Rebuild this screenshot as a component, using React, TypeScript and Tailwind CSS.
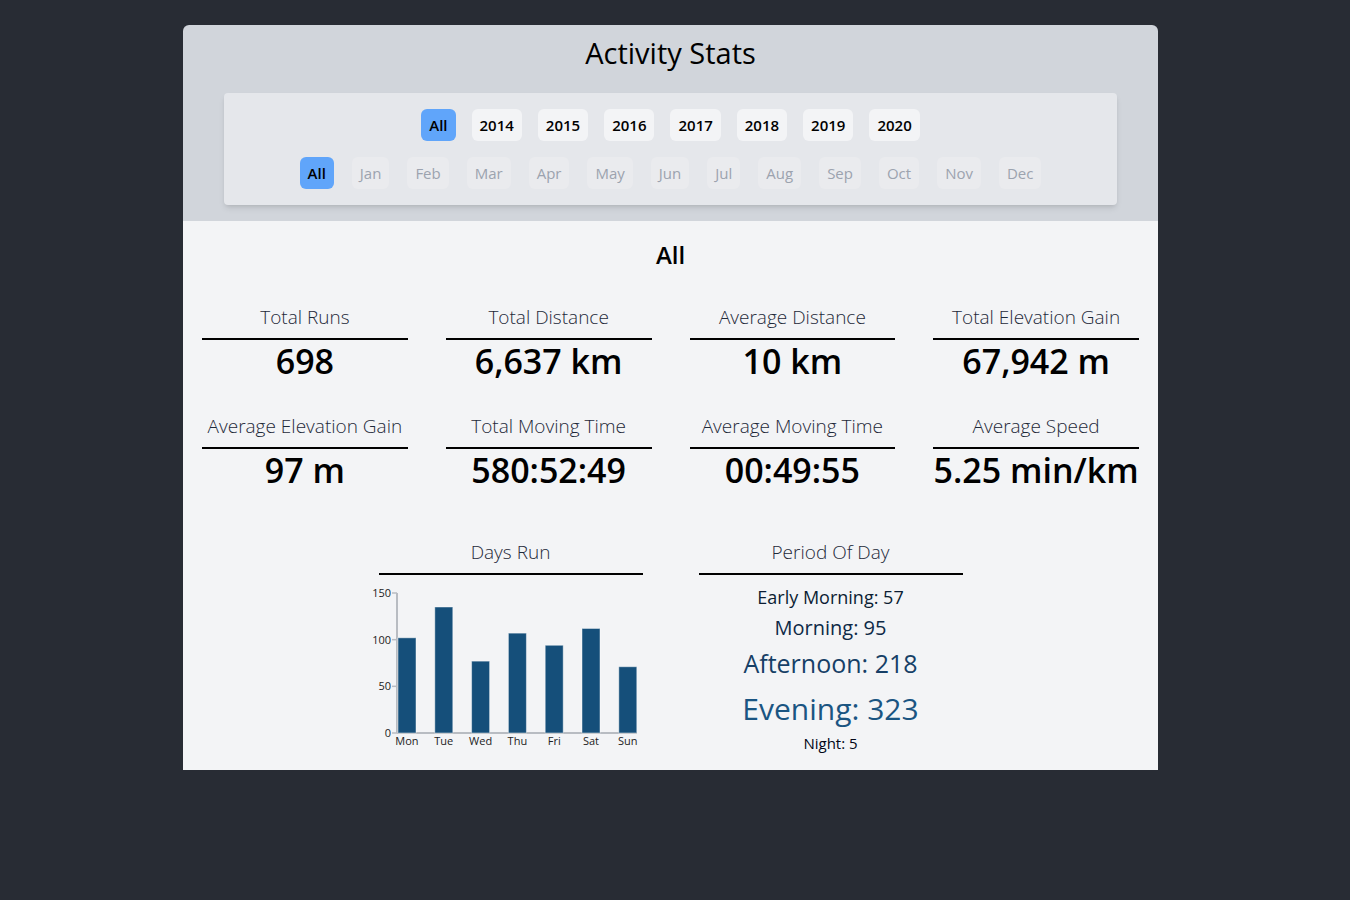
import React, { useState } from 'react';

const YEARS = ['All', '2014', '2015', '2016', '2017', '2018', '2019', '2020'];
const MONTHS = ['All', 'Jan', 'Feb', 'Mar', 'Apr', 'May', 'Jun', 'Jul', 'Aug', 'Sep', 'Oct', 'Nov', 'Dec'];

const STATS = [
  { label: 'Total Runs', value: '698' },
  { label: 'Total Distance', value: '6,637 km' },
  { label: 'Average Distance', value: '10 km' },
  { label: 'Total Elevation Gain', value: '67,942 m' },
  { label: 'Average Elevation Gain', value: '97 m' },
  { label: 'Total Moving Time', value: '580:52:49' },
  { label: 'Average Moving Time', value: '00:49:55' },
  { label: 'Average Speed', value: '5.25 min/km' },
];

const DAYS = [
  { day: 'Mon', runs: 102 },
  { day: 'Tue', runs: 135 },
  { day: 'Wed', runs: 77 },
  { day: 'Thu', runs: 107 },
  { day: 'Fri', runs: 94 },
  { day: 'Sat', runs: 112 },
  { day: 'Sun', runs: 71 },
];

const FONT = { fontFamily: '"Open Sans", "Noto Sans", sans-serif' };

function DaysChart() {
  // y axis at x=18, zero line at y=153, 150 runs = 140px
  const scale = 140 / 150;
  return (
    <svg width="264" height="174" className="block overflow-visible">
      <line x1="18" y1="13" x2="18" y2="153" stroke="#b8bcc2" strokeWidth="2" />
      <line x1="18" y1="153" x2="258" y2="153" stroke="#b8bcc2" strokeWidth="2" />
      {[0, 50, 100, 150].map((t) => {
        const y = 153 - t * scale;
        return (
          <g key={t}>
            <line x1="13" y1={y} x2="18" y2={y} stroke="#b8bcc2" strokeWidth="1.5" />
            <text x="12" y={y + 4} textAnchor="end" fontSize="11" fill="#222">
              {t}
            </text>
          </g>
        );
      })}
      {DAYS.map((d, i) => {
        const cx = 28 + i * 36.8;
        const h = d.runs * scale;
        return (
          <g key={d.day}>
            <rect
              x={cx - 9}
              y={153 - h}
              width="18"
              height={h}
              fill="#154f7a"
              stroke="rgba(255,255,255,0.45)"
              strokeWidth="1"
            />
            <text x={cx} y="165" textAnchor="middle" fontSize="11" fill="#222">
              {d.day}
            </text>
          </g>
        );
      })}
    </svg>
  );
}

export default function App() {
  const [year, setYear] = useState('All');
  const [month, setMonth] = useState('All');

  return (
    <div className="min-h-screen bg-[#282c34] pt-[25px] pr-[9px]" style={FONT}>
      <div className="w-[975px] mx-auto rounded-t-md overflow-hidden">
        {/* Header with filters */}
        <div className="bg-[#d1d5db] pt-[10px] pb-4 flex flex-col items-center">
          <h1 className="text-[29px] leading-9 text-black">Activity Stats</h1>
          <div className="mt-[22px] w-[893px] bg-[#e5e7eb] rounded shadow-md py-4 flex flex-col items-center gap-4">
            <div className="flex gap-4">
              {YEARS.map((y) => (
                <button
                  key={y}
                  onClick={() => setYear(y)}
                  className={`h-8 px-2 rounded-md text-[15px] font-semibold ${
                    year === y ? 'bg-[#60a5fa] text-black' : 'bg-[#f3f4f6] text-black'
                  }`}
                >
                  {y}
                </button>
              ))}
            </div>
            <div className="flex gap-[18px]">
              {MONTHS.map((m) => (
                <button
                  key={m}
                  onClick={() => setMonth(m)}
                  className={`h-8 px-2 rounded-md text-[15px] font-medium ${
                    month === m ? 'bg-[#60a5fa] text-black font-semibold' : 'bg-[#eaebee] text-[#9ca3af]'
                  }`}
                >
                  {m}
                </button>
              ))}
            </div>
          </div>
        </div>

        {/* Stats */}
        <div className="bg-[#f3f4f6] px-[19px] pt-[18px] pb-4">
          <h2 className="text-center text-2xl leading-8 font-semibold text-black">{month === 'All' ? year : month}</h2>
          <div className="mt-8 grid grid-cols-4 gap-x-[38px] gap-y-[30px]">
            {STATS.map((s) => (
              <div key={s.label} className="flex flex-col items-center">
                <div className="w-full text-center text-[19px] leading-7 font-light text-gray-800 pb-[7px] border-b-2 border-black">
                  {s.label}
                </div>
                <div className="text-[34px] leading-[42px] font-semibold text-black whitespace-nowrap">{s.value}</div>
              </div>
            ))}
          </div>

          <div className="mt-[47px] flex justify-center gap-14">
            <div className="w-[264px]">
              <div className="text-center text-[19px] leading-7 font-light text-gray-800 pb-[7px] border-b-2 border-black">
                Days Run
              </div>
              <div className="mt-[5px]">
                <DaysChart />
              </div>
            </div>
            <div className="w-[264px]">
              <div className="text-center text-[19px] leading-7 font-light text-gray-800 pb-[7px] border-b-2 border-black">
                Period Of Day
              </div>
              <div className="mt-[7px] flex flex-col items-center">
                <div className="h-[30px] flex items-center text-lg text-[#0b1d33]">Early Morning: 57</div>
                <div className="h-[32px] flex items-center text-xl text-[#0e2a47]">Morning: 95</div>
                <div className="h-[40px] flex items-center text-[25px] text-[#163f66]">Afternoon: 218</div>
                <div className="h-[48px] flex items-center text-[30px] text-[#1a5582]">Evening: 323</div>
                <div className="h-[22px] flex items-center text-[15px] text-[#020617]">Night: 5</div>
              </div>
            </div>
          </div>
        </div>
      </div>
    </div>
  );
}
